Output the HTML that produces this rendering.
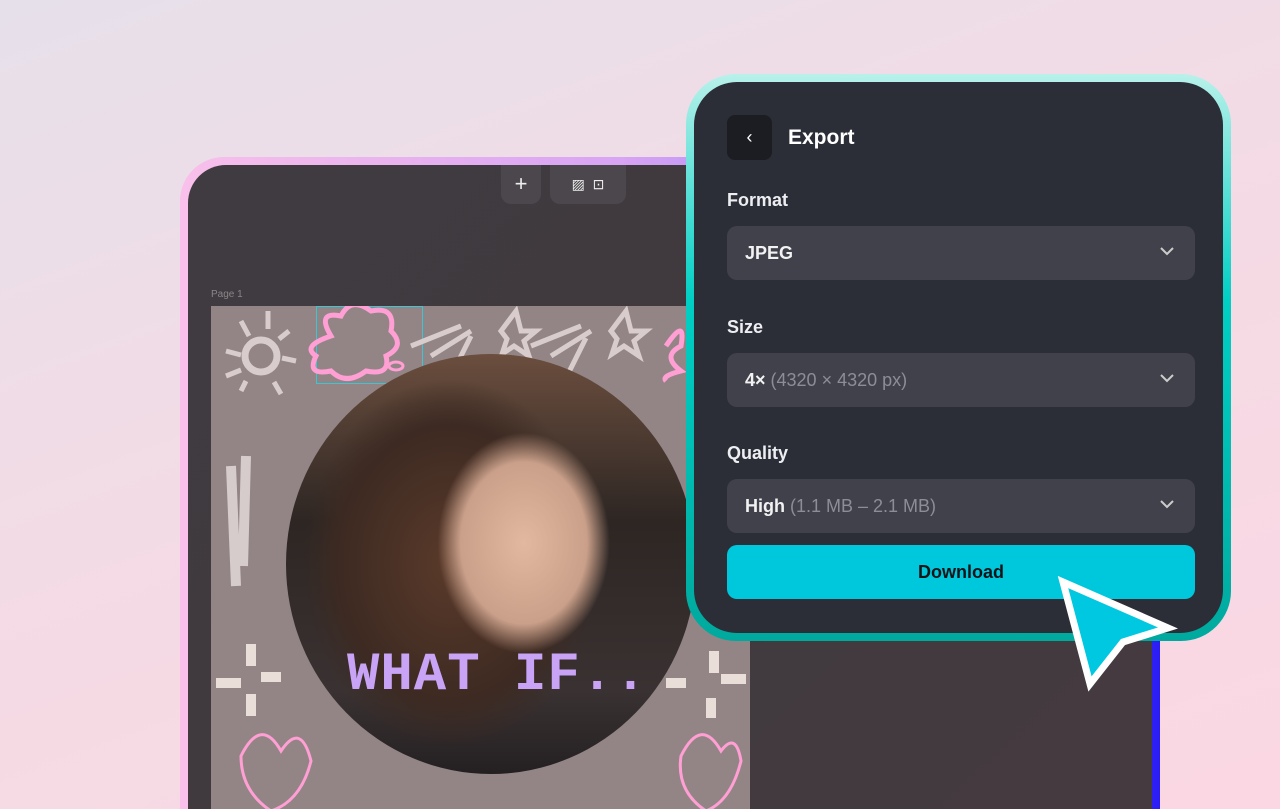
<!DOCTYPE html>
<html style="width:1280px;height:809px;overflow:hidden"><head><style>
*{margin:0;padding:0;box-sizing:border-box}
body{width:1280px;height:809px;overflow:hidden;position:relative;font-family:"Liberation Sans",sans-serif;background:linear-gradient(160deg,#e6e0ea 0%,#f3dbe5 45%,#fbd7e3 100%)}
.wrap{position:absolute;left:0;top:0;width:1280px;height:809px;overflow:hidden}
.frame{position:absolute;left:180px;top:157px;width:980px;height:652px;border-radius:44px 44px 0 0;background:linear-gradient(90deg,#f8c0ea,#d8a4f4 45%,#8a7cf8 80%,#2a1cf5);padding:8px 8px 0 8px}
.inner{width:100%;height:100%;border-radius:38px 38px 0 0;background:linear-gradient(135deg,#3f3b40,#403a3e 60%,#453a40);position:relative;overflow:hidden}
.tb{position:absolute;top:0;height:39px;background:#4b474c;border-radius:0 0 10px 10px;color:#eee;font-size:22px;text-align:center;line-height:38px}
.canvas{position:absolute;left:23px;top:141px;width:539px;height:503px;background:#938586;overflow:hidden}
.panel{position:absolute;left:686px;top:74px;width:545px;height:567px;border-radius:50px;background:linear-gradient(180deg,#b8f1ea 0%,#00cfc4 40%,#00a99e 100%);padding:8px}
.pin{width:100%;height:100%;border-radius:43px;background:#2c2e37;position:relative;color:#fff}
.lbl{position:absolute;left:33px;font-size:18px;font-weight:bold;color:#eceef2}
.sel{position:absolute;left:33px;width:468px;height:54px;border-radius:10px;background:#41414b;font-size:18px;font-weight:bold;line-height:54px;padding-left:18px;color:#f2f2f2}
.sel span{color:#8c8d96;font-weight:normal}
.sel svg{position:absolute;right:20px;top:20px}
</style></head><body><div class="wrap">
<div class="frame"><div class="inner">
 <div class="tb" style="left:313px;width:40px">+</div>
 <div class="tb" style="left:362px;width:76px;font-size:14px">▨ &nbsp;⊡</div>
 <div style="position:absolute;left:23px;top:124px;font-size:10px;color:#8a8589">Page 1</div>
 <div class="canvas">
  <div style="position:absolute;left:105px;top:0;width:107px;height:78px;border:1.5px solid #3cc6d4"></div>
  <svg width="539" height="503" style="position:absolute;left:0;top:0">
   <path d="M120 30 q-15 -25 10 -20 q10 -20 30 -5 q25 -5 20 20 q15 15 -5 25 q5 20 -20 15 q-20 15 -35 0 q-25 5 -15 -15 q-15 -10 15 -20z" fill="none" stroke="#ff9fd4" stroke-width="5"/>
   <ellipse cx="185" cy="60" rx="7" ry="4" fill="none" stroke="#ff9fd4" stroke-width="3"/>
   <circle cx="50" cy="50" r="16" fill="none" stroke="#d9cccc" stroke-width="7"/>
   <g stroke="#d9cccc" stroke-width="5" fill="none">
    <path d="M30 15 l8 15 M57 5 l0 18 M78 25 l-10 8 M85 55 l-14 -3 M70 88 l-7 -12 M30 85 l5 -10 M15 45 l15 4 M15 70 l15 -6"/>
    <path d="M200 40 l50 -20 M220 50 l40 -25 M240 70 l20 -40 M290 25 l15 -20 l5 20 l15 0 l-12 10 l5 15 l-15 -10 l-12 8 l5 -15 z"/>
    <path d="M320 40 l50 -20 M340 50 l40 -25 M355 72 l20 -40 M400 25 l15 -20 l5 20 l15 0 l-12 10 l5 15 l-15 -10 l-12 8 l5 -15 z"/>
    <path d="M20 160 l5 120 M35 150 l-3 110" stroke-width="10" stroke="#d6cccb"/>
   </g>
   <g fill="#eaded8"><rect x="35" y="338" width="10" height="22"/><rect x="5" y="372" width="25" height="10"/><rect x="50" y="366" width="20" height="10"/><rect x="35" y="388" width="10" height="22"/><rect x="498" y="345" width="10" height="22"/><rect x="510" y="368" width="25" height="10"/><rect x="455" y="372" width="20" height="10"/><rect x="495" y="392" width="10" height="20"/></g>
   <path d="M30 450 q20 -40 40 -5 q20 -30 30 10 q-10 40 -40 50 q-30 -20 -30 -55z M470 450 q20 -40 40 -5 q15 -20 20 10 q-10 40 -35 50 q-30 -20 -25 -55z" fill="none" stroke="#ff9fd4" stroke-width="3"/>
   <path d="M455 40 q20 -30 15 0 q-20 10 0 25 q-20 5 -15 10" fill="none" stroke="#ff9fd4" stroke-width="5"/>
  </svg>
  <div style="position:absolute;left:75px;top:48px;width:410px;height:420px;border-radius:50%;background:radial-gradient(ellipse 28% 35% at 58% 45%,#e2b8a0 0%,#caa08a 55%,transparent 75%),radial-gradient(ellipse 45% 55% at 40% 50%,#5a3a2a 0%,#3d2a22 60%,transparent 80%),linear-gradient(180deg,#6b4e3e,#2d2623 40%,#3a3232 80%,#242022);overflow:hidden"></div>
  <div style="position:absolute;left:136px;top:338px;font-family:'Liberation Mono',monospace;font-weight:bold;font-size:54px;line-height:64px;color:#c8a3f6;letter-spacing:1px">WHAT IF..</div>
 </div>
</div></div>
<div class="panel"><div class="pin">
 <div style="position:absolute;left:33px;top:33px;width:45px;height:45px;border-radius:8px;background:#1c1d22;text-align:center;line-height:44px;font-size:18px;color:#fff">‹</div>
 <div style="position:absolute;left:94px;top:44px;font-size:21px;font-weight:bold">Export</div>
 <div class="lbl" style="top:108px">Format</div>
 <div class="sel" style="top:144px">JPEG<svg width="16" height="10"><path d="M2 2l6 6 6-6" stroke="#ccc" stroke-width="2" fill="none"/></svg></div>
 <div class="lbl" style="top:235px">Size</div>
 <div class="sel" style="top:271px">4× <span>(4320 × 4320 px)</span><svg width="16" height="10"><path d="M2 2l6 6 6-6" stroke="#ccc" stroke-width="2" fill="none"/></svg></div>
 <div class="lbl" style="top:361px">Quality</div>
 <div class="sel" style="top:397px">High <span>(1.1 MB – 2.1 MB)</span><svg width="16" height="10"><path d="M2 2l6 6 6-6" stroke="#ccc" stroke-width="2" fill="none"/></svg></div>
 <div style="position:absolute;left:33px;top:463px;width:468px;height:54px;border-radius:10px;background:#00c8dc;color:#101418;font-weight:bold;font-size:18px;text-align:center;line-height:54px">Download</div>
</div></div>
<svg width="1280" height="809" style="position:absolute;left:0;top:0;display:block">
 <path d="M1063 582 L1168 628 L1123 642 L1090 684 Z" fill="#00c8e0" stroke="#fff" stroke-width="7" stroke-linejoin="miter"/>
</svg>
</div></body></html>
